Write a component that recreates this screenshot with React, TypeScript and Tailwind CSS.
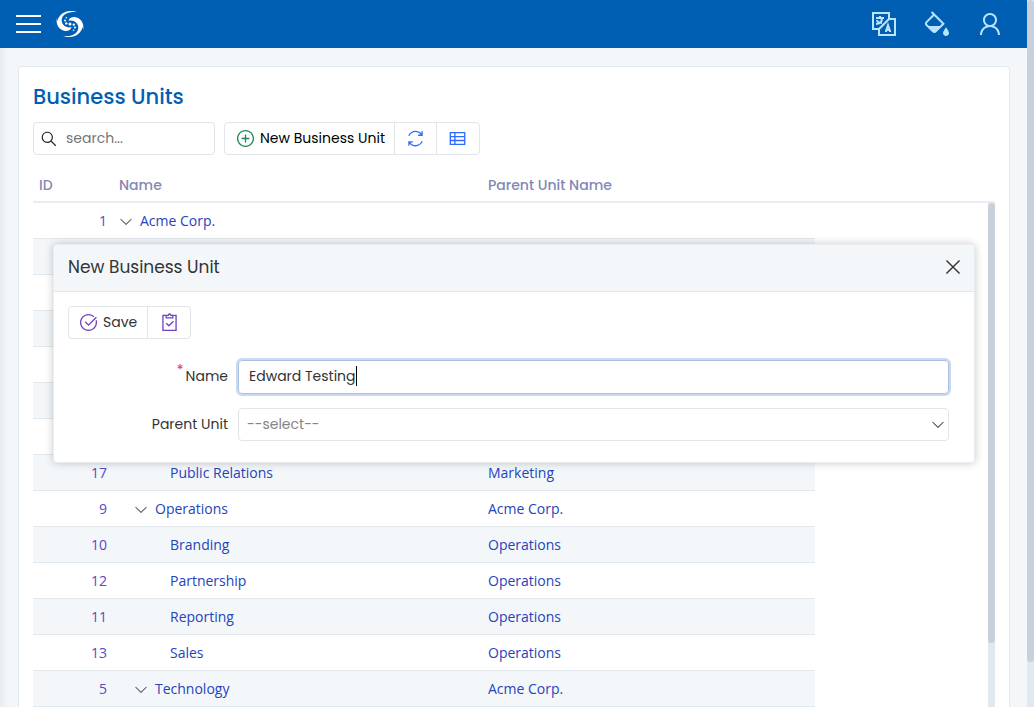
import { useState } from "react";
import {
  LiaAngleDownSolid,
  LiaCheckCircle,
  LiaClipboardCheckSolid,
  LiaFillDripSolid,
  LiaLanguageSolid,
  LiaPlusCircleSolid,
  LiaSearchSolid,
  LiaSyncSolid,
  LiaThListSolid,
  LiaTimesSolid,
  LiaUser,
} from "react-icons/lia";

type Unit = { id: number; name: string; level: number; group?: boolean; parent?: string };

const unitsAbove: Unit[] = [{ id: 1, name: "Acme Corp.", level: 0, group: true }];

const coveredRows = ["a", "b", "c", "d", "e", "f"];

const unitsBelow: Unit[] = [
  { id: 17, name: "Public Relations", level: 2, parent: "Marketing" },
  { id: 9, name: "Operations", level: 1, group: true, parent: "Acme Corp." },
  { id: 10, name: "Branding", level: 2, parent: "Operations" },
  { id: 12, name: "Partnership", level: 2, parent: "Operations" },
  { id: 11, name: "Reporting", level: 2, parent: "Operations" },
  { id: 13, name: "Sales", level: 2, parent: "Operations" },
  { id: 5, name: "Technology", level: 1, group: true, parent: "Acme Corp." },
];

const indents = ["pl-0", "pl-[15px]", "pl-[30px]"];

const rowClass = "h-9 border-b border-[#e3e8ec] even:bg-[#f3f7fa]";

function UnitRow({ unit }: { unit: Unit }) {
  return (
    <tr className={rowClass}>
      <td className="pr-1.5 text-right">
        <a href="#unit" className="text-[#5a48c8]">{unit.id}</a>
      </td>
      <td className="px-1.5">
        <div className={`flex items-center ${indents[unit.level]}`}>
          <span className="flex w-[21px] shrink-0">
            {unit.group && (
              <button type="button" aria-label="Collapse" className="text-[#444]">
                <LiaAngleDownSolid className="size-3.5" />
              </button>
            )}
          </span>
          <a href="#unit">{unit.name}</a>
        </div>
      </td>
      <td className="px-1.5">{unit.parent && <a href="#unit">{unit.parent}</a>}</td>
    </tr>
  );
}

function Logo() {
  return (
    <svg viewBox="0 0 28 28" className="size-7" fill="white" aria-hidden="true">
      <path d="M1.2 11.2C3 5 8 .8 14.6 .9C17.2 .9 19.4 1.4 21 2.2C15.4 1.3 10.4 2.6 7.6 5.6C5 8.4 5.2 12.2 7.3 14.8C9.4 17.2 12.4 17.8 15.6 17.3C14.8 19.8 12.6 21.1 9.8 21C5.4 20.8 2 17.8 .9 13.6C.5 11.8 .5 9.8 .9 7.8Z" />
      <path d="M26.8 16.8C25 23 20 27.2 13.4 27.1C10.8 27.1 8.6 26.6 7 25.8C12.6 26.7 17.6 25.4 20.4 22.4C23 19.6 22.8 15.8 20.7 13.2C18.6 10.8 15.6 10.2 12.4 10.7C13.2 8.2 15.4 6.9 18.2 7C22.6 7.2 26 10.2 27.1 14.4C27.5 16.2 27.5 18.2 27.1 20.2Z" />
      <circle cx="10.4" cy="7.8" r=".8" />
      <circle cx="9" cy="10.6" r="1" />
      <circle cx="10.2" cy="13.4" r="1.2" />
      <circle cx="14" cy="14" r="1.5" />
      <circle cx="17.8" cy="14.6" r="1.2" />
      <circle cx="19" cy="17.4" r="1" />
      <circle cx="17.6" cy="20.2" r=".8" />
    </svg>
  );
}

function NewUnitDialog() {
  const [name, setName] = useState("Edward Testing");
  return (
    <section
      role="dialog"
      aria-labelledby="dialog-title"
      className="absolute top-[244px] right-[59px] left-[53px] rounded-[4px] border border-[#e9edf1] bg-white text-[#333] shadow-[0_0_8px_rgba(0,0,0,0.22)]"
    >
      <header className="flex h-[47px] items-center justify-between rounded-t-[3px] border-b border-[#e2e7eb] bg-[#f3f7fa] pr-2.5 pb-0.5 pl-3.5">
        <h2 id="dialog-title" className="text-[17px]">New Business Unit</h2>
        <button type="button" aria-label="Close">
          <LiaTimesSolid className="size-[22px]" />
        </button>
      </header>
      <form className="pt-3.5 pr-[25px] pb-[21px] pl-3.5" onSubmit={(e) => e.preventDefault()}>
        <div className="inline-flex h-[33px] rounded-[4px] border border-[#e2e5e8]">
          <button type="submit" className="flex items-center gap-1 border-r border-[#e2e5e8] pr-2.5 pl-[9px]">
            <LiaCheckCircle className="size-[21px] text-[#6f42c1]" />
            <span className="pb-0.5">Save</span>
          </button>
          <button type="button" aria-label="Apply changes" className="flex w-[42px] items-center justify-center">
            <LiaClipboardCheckSolid className="size-[21px] text-[#6f42c1]" />
          </button>
        </div>
        <div className="mt-[21px] grid grid-cols-[160px_1fr] items-center gap-x-2.5 gap-y-3.5">
          <label htmlFor="unit-name" className="flex justify-end gap-0.5 pb-0.5">
            <span className="-mt-1.5 text-[#dc3545]">*</span>Name
          </label>
          <div className="flex h-[34px] items-center rounded-[4px] border border-[#a9c0e2] pb-0.5 pl-2.5 ring-2 ring-[#c9daf1]">
            <input
              id="unit-name"
              value={name}
              onChange={(e) => setName(e.target.value)}
              className="field-sizing-content caret-transparent outline-none"
            />
            <span className="h-5 w-px bg-black" />
          </div>
          <label htmlFor="parent-unit" className="pb-0.5 text-right">Parent Unit</label>
          <div className="relative">
            <select
              id="parent-unit"
              className="h-[33px] w-full appearance-none rounded-[4px] border border-[#e2e5e8] bg-white px-2 pb-0.5 text-[#858585] outline-none"
            >
              <option>--select--</option>
            </select>
            <LiaAngleDownSolid className="pointer-events-none absolute top-[9px] right-1 size-3.5" />
          </div>
        </div>
      </form>
    </section>
  );
}

export default function App() {
  return (
    <div className="relative flex h-screen overflow-hidden bg-[#f3f7fa] font-['Poppins','Inter',sans-serif] text-sm text-[#212529]">
      <div className="flex min-w-0 flex-1 flex-col">
        <header className="flex h-12 shrink-0 items-center justify-between bg-[#005fb2] pr-[21px] pl-4">
          <div className="flex items-center gap-[15px]">
            <button type="button" aria-label="Menu" className="flex w-[25px] flex-col gap-1.5">
              <span className="h-0.5 bg-white" />
              <span className="h-0.5 bg-white" />
              <span className="h-0.5 bg-white" />
            </button>
            <a href="#home" aria-label="Home">
              <Logo />
            </a>
          </div>
          <nav className="flex items-center gap-[21px] text-[#b9e3ff]">
            <button type="button" aria-label="Language"><LiaLanguageSolid className="size-8" /></button>
            <button type="button" aria-label="Theme"><LiaFillDripSolid className="size-8" /></button>
            <button type="button" aria-label="Account"><LiaUser className="size-8" /></button>
          </nav>
        </header>
        <main className="flex min-h-0 flex-1 overflow-hidden pt-[18px] pr-[17px] pl-[18px] shadow-[inset_8px_0_8px_-6px_rgba(0,0,0,0.07)]">
          <div className="flex min-w-0 flex-1 flex-col rounded-t-[4px] border border-b-0 border-[#e4e9ed] bg-white px-3.5 pt-3.5">
            <h1 className="text-[21px] leading-8 font-medium text-[#005fb2]">Business Units</h1>
            <div className="mt-[9px] flex shrink-0 gap-[9px]">
              <label className="flex h-[33px] w-[182px] items-center gap-2 rounded-[4px] border border-[#e2e5e8] px-1.5">
                <LiaSearchSolid className="size-[18px] shrink-0 -scale-x-100" />
                <input type="search" aria-label="Search" placeholder="search..." className="min-w-0 flex-1 pb-0.5 outline-none placeholder:text-[#757575]" />
              </label>
              <div className="flex h-[33px] rounded-[4px] border border-[#e2e5e8] text-black">
                <button type="button" className="flex items-center gap-1 pr-[9px] pl-2.5">
                  <LiaPlusCircleSolid className="size-[21px] text-[#198754]" />
                  <span className="pb-0.5">New Business Unit</span>
                </button>
                <button type="button" aria-label="Refresh" className="flex w-[42px] items-center justify-center border-l border-[#e2e5e8] text-[#2f6bff]">
                  <LiaSyncSolid className="size-[21px]" />
                </button>
                <button type="button" aria-label="Columns" className="flex w-[43px] items-center justify-center border-l border-[#e2e5e8] text-[#2f6bff]">
                  <LiaThListSolid className="size-[21px]" />
                </button>
              </div>
            </div>
            <div className="mt-3 flex h-9 shrink-0 items-center border-b-2 border-[#e9edf1] pt-0.5 font-medium text-[#8288b5]">
              <span className="w-20 pl-1.5">ID</span>
              <span className="w-[369px] pl-1.5">Name</span>
              <span className="pl-1.5">Parent Unit Name</span>
            </div>
            <div className="flex min-h-0 flex-1">
              <div className="min-w-0 flex-1 overflow-hidden">
                <table className="w-[782px] table-fixed border-separate border-spacing-0 font-['Open_Sans',sans-serif] text-[#2443bd] [&_td]:h-9 [&_td]:border-b [&_td]:border-[#e3e8ec]">
                  <colgroup>
                    <col className="w-20" />
                    <col className="w-[369px]" />
                    <col />
                  </colgroup>
                  <tbody>
                    {unitsAbove.map((unit) => <UnitRow key={unit.id} unit={unit} />)}
                    {coveredRows.map((key) => (
                      <tr key={key} className={rowClass}>
                        <td /><td /><td />
                      </tr>
                    ))}
                    {unitsBelow.map((unit) => <UnitRow key={unit.id} unit={unit} />)}
                  </tbody>
                </table>
              </div>
              <div className="w-[7px] bg-[#e2e8ef]">
                <div className="h-[440px] rounded-full bg-[#c9d0db]" />
              </div>
            </div>
          </div>
        </main>
      </div>
      <div className="w-[7px] bg-[#e2e8ef]">
        <div className="h-[662px] rounded-full bg-[#c9d0db]" />
      </div>
      <NewUnitDialog />
    </div>
  );
}
